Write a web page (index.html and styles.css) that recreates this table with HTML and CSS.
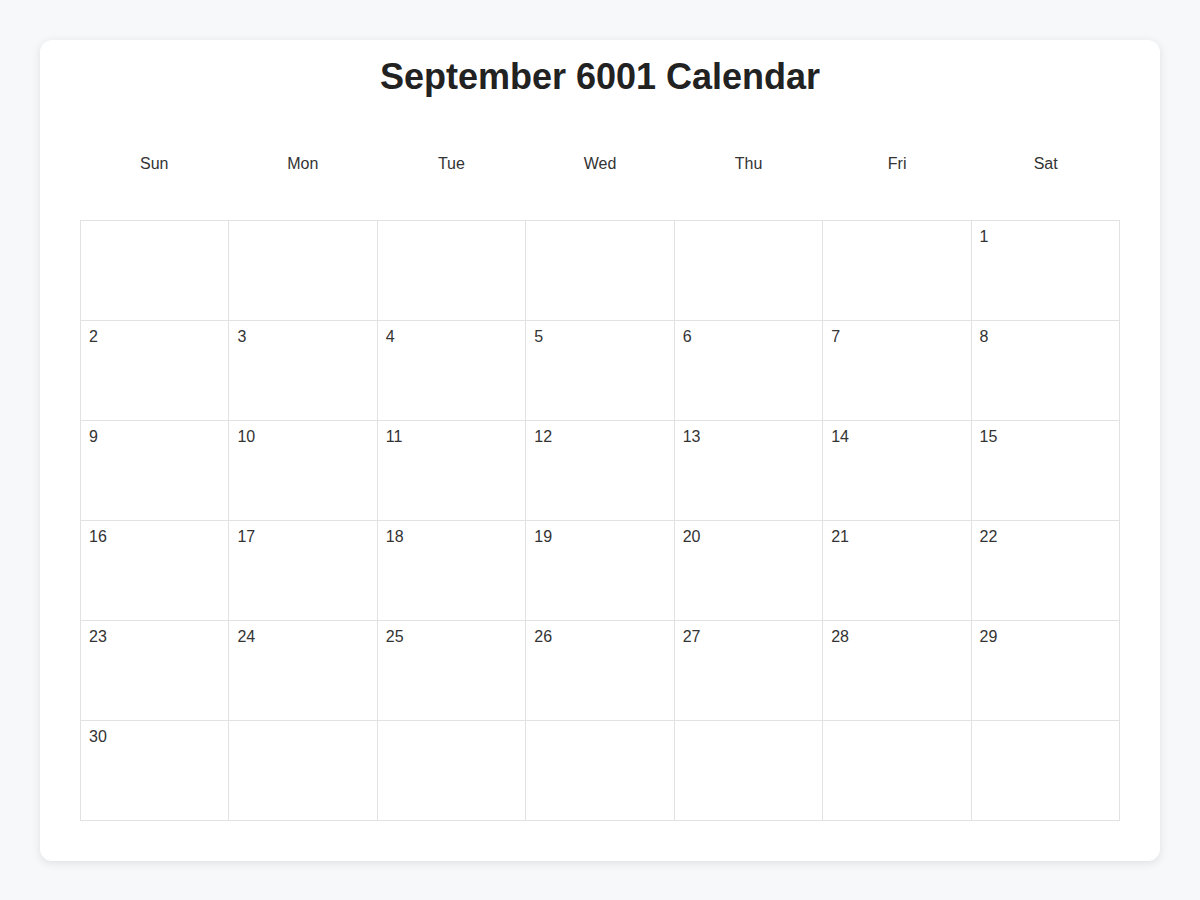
FILE: index.html
```html
<!DOCTYPE html>
<html lang="en">
<head>
<meta charset="utf-8">
<title>September 6001 Calendar</title>
<link rel="stylesheet" href="styles.css">
</head>
<body>
<div class="card">
  <h1 class="title">September 6001 Calendar</h1>
  <div class="weekdays">
    <div class="weekday">Sun</div>
    <div class="weekday">Mon</div>
    <div class="weekday">Tue</div>
    <div class="weekday">Wed</div>
    <div class="weekday">Thu</div>
    <div class="weekday">Fri</div>
    <div class="weekday">Sat</div>
  </div>
  <div class="grid">
    <div class="cell"></div><div class="cell"></div><div class="cell"></div><div class="cell"></div><div class="cell"></div><div class="cell"></div><div class="cell">1</div>
    <div class="cell">2</div><div class="cell">3</div><div class="cell">4</div><div class="cell">5</div><div class="cell">6</div><div class="cell">7</div><div class="cell">8</div>
    <div class="cell">9</div><div class="cell">10</div><div class="cell">11</div><div class="cell">12</div><div class="cell">13</div><div class="cell">14</div><div class="cell">15</div>
    <div class="cell">16</div><div class="cell">17</div><div class="cell">18</div><div class="cell">19</div><div class="cell">20</div><div class="cell">21</div><div class="cell">22</div>
    <div class="cell">23</div><div class="cell">24</div><div class="cell">25</div><div class="cell">26</div><div class="cell">27</div><div class="cell">28</div><div class="cell">29</div>
    <div class="cell">30</div><div class="cell"></div><div class="cell"></div><div class="cell"></div><div class="cell"></div><div class="cell"></div><div class="cell"></div>
  </div>
</div>
</body>
</html>
```
FILE: styles.css
```css
html, body {
  margin: 0;
  padding: 0;
}
body {
  background: #f7f8fa;
  font-family: "Liberation Sans", Arial, sans-serif;
  color: #333;
  padding: 40px;
}
.card {
  background: #fff;
  border-radius: 12px;
  box-shadow: 0 2px 10px rgba(0, 0, 0, 0.1);
  padding: 16px 40px 40px;
}
.title {
  margin: 0;
  text-align: center;
  font-size: 36px;
  line-height: 41px;
  font-weight: bold;
  color: #222;
}
.weekdays {
  display: grid;
  grid-template-columns: repeat(7, 1fr);
  margin-top: 37px;
  margin-bottom: 26px;
}
.weekday {
  height: 60px;
  display: flex;
  align-items: center;
  justify-content: center;
  font-size: 16px;
  color: #333;
}
.grid {
  display: grid;
  grid-template-columns: repeat(7, 1fr);
  border-top: 1px solid #e2e2e2;
  border-left: 1px solid #e2e2e2;
}
.cell {
  height: 100px;
  box-sizing: border-box;
  border-right: 1px solid #e2e2e2;
  border-bottom: 1px solid #e2e2e2;
  padding: 7px 8px;
  font-size: 16px;
  line-height: 18px;
  color: #333;
}
```
